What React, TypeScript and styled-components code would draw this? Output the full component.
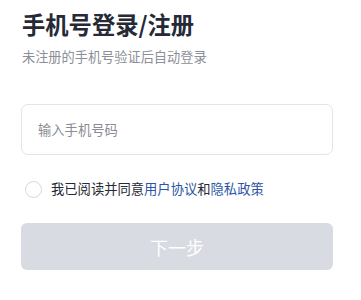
import React, { useState } from 'react';
import styled, { createGlobalStyle } from 'styled-components';

const GlobalStyle = createGlobalStyle`
  html, body {
    margin: 0;
    padding: 0;
    background: #ffffff;
  }
  * {
    box-sizing: border-box;
  }
`;

const App: React.FC = () => {
  const [phone, setPhone] = useState('');
  const [agreed, setAgreed] = useState(false);

  return (
    <>
      <GlobalStyle />
      <Page>
        <Title>手机号登录/注册</Title>
        <SubTitle>未注册的手机号验证后自动登录</SubTitle>
        <PhoneInput
          type="tel"
          placeholder="输入手机号码"
          value={phone}
          onChange={(e) => setPhone(e.target.value)}
        />
        <AgreeRow>
          <Radio $checked={agreed} onClick={() => setAgreed(!agreed)} />
          <AgreeText>
            我已阅读并同意<Link>用户协议</Link>和<Link>隐私政策</Link>
          </AgreeText>
        </AgreeRow>
        <NextButton disabled={!agreed || phone.length < 11}>下一步</NextButton>
      </Page>
    </>
  );
};

const Page = styled.div`
  width: 361px;
  padding: 10px 28px 0 21px;
  display: flex;
  flex-direction: column;
  font-family: 'Noto Sans CJK SC', 'Noto Sans', sans-serif;
`;

const Title = styled.h1`
  margin: 0 0 0 1px;
  font-size: 23.3px;
  line-height: 28px;
  font-weight: 700;
  color: #262936;
`;

const SubTitle = styled.div`
  margin: 10px 0 0 1px;
  font-size: 13.2px;
  line-height: 18px;
  color: #8c8f99;
`;

const PhoneInput = styled.input`
  margin-top: 38px;
  width: 100%;
  height: 51px;
  border: 1px solid #e3e4e8;
  border-radius: 7px;
  padding: 0 16px;
  font-family: inherit;
  font-size: 13.3px;
  color: #262936;
  outline: none;
  &::placeholder {
    color: #888b94;
  }
`;

const AgreeRow = styled.div`
  margin-top: 25px;
  display: flex;
  align-items: center;
  gap: 9px;
  padding-left: 4px;
`;

const Radio = styled.span<{ $checked: boolean }>`
  width: 17px;
  height: 17px;
  border-radius: 50%;
  border: 1px solid ${(p) => (p.$checked ? '#2c55a6' : '#d6d7dc')};
  background: ${(p) => (p.$checked ? '#2c55a6' : '#ffffff')};
  flex-shrink: 0;
  cursor: pointer;
`;

const AgreeText = styled.span`
  font-size: 13.3px;
  line-height: 18px;
  color: #262936;
`;

const Link = styled.span`
  color: #2c55a6;
`;

const NextButton = styled.button`
  margin-top: 25px;
  width: 100%;
  height: 47px;
  border: none;
  border-radius: 6px;
  background: #d9dbe3;
  color: #ffffff;
  font-family: inherit;
  font-size: 18px;
`;

export default App;
